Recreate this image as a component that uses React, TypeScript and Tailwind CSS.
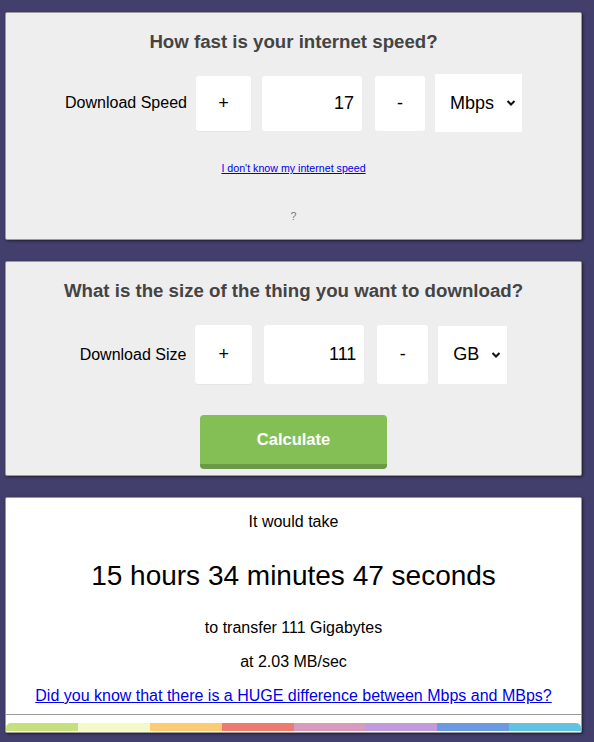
import React, { useState } from "react";

const stripe = [
  "bg-[#c5e07d]",
  "bg-[#f4f9c8]",
  "bg-[#fdcb71]",
  "bg-[#ef7b70]",
  "bg-[#d99bbb]",
  "bg-[#c29bdc]",
  "bg-[#6a9be0]",
  "bg-[#62c2e2]",
];

const Chevron = () => (
  <svg
    width="10"
    height="7"
    viewBox="0 0 10 7"
    className="pointer-events-none absolute right-[6px] top-1/2 -translate-y-1/2"
  >
    <path d="M1.5 1.5 5 5 8.5 1.5" fill="none" stroke="#111" strokeWidth="2" />
  </svg>
);

interface StepperProps {
  label: string;
  value: number;
  onChange: (v: number) => void;
  units: string[];
  unit: string;
  onUnit: (u: string) => void;
  big?: boolean;
}

const Stepper: React.FC<StepperProps> = ({ label, value, onChange, units, unit, onUnit, big }) => {
  const btn = big ? "w-[57px] h-[59px]" : "w-[55px] h-[55px]";
  return (
    <div className="flex items-center justify-center">
      <span className="text-[16px] text-black mr-[9px]">{label}</span>
      <button
        className={`${btn} bg-white rounded-[3px] text-[18px] text-black shadow-[0_1px_1px_rgba(0,0,0,0.04)]`}
        onClick={() => onChange(value + 1)}
      >
        +
      </button>
      <input
        value={value}
        onChange={(e) => onChange(Number(e.currentTarget.value) || 0)}
        className={`${big ? "h-[59px] ml-[12px]" : "h-[55px] ml-[11px]"} w-[100px] bg-white rounded-[3px] text-right pr-[8px] text-[18px] text-black outline-none`}
      />
      <button
        className={`${big ? "w-[51px] h-[59px] ml-[13px]" : "w-[50px] h-[55px] ml-[13px]"} bg-white rounded-[3px] text-[18px] text-black`}
        onClick={() => onChange(Math.max(0, value - 1))}
      >
        -
      </button>
      <div className={`relative ${big ? "ml-[10px] w-[69px] h-[58px]" : "ml-[10px] w-[87px] h-[58px]"} bg-white`}>
        <select
          value={unit}
          onChange={(e) => onUnit(e.currentTarget.value)}
          className="appearance-none w-full h-full bg-white pl-[15px] text-[18px] text-black outline-none"
        >
          {units.map((u) => (
            <option key={u}>{u}</option>
          ))}
        </select>
        <Chevron />
      </div>
    </div>
  );
};

export default function App() {
  const [speed, setSpeed] = useState(17);
  const [size, setSize] = useState(111);
  const [speedUnit, setSpeedUnit] = useState("Mbps");
  const [sizeUnit, setSizeUnit] = useState("GB");

  const panel =
    "w-[577px] border border-[#9a9a9a] rounded-[2px] shadow-[1px_1px_3px_rgba(0,0,0,0.55)]";

  return (
    <div
      className="min-h-[742px] bg-[#433f6d] pt-[12px] pl-[5px] flex flex-col gap-[21px]"
      style={{ fontFamily: '"Liberation Sans", Arial, sans-serif' }}
    >
      <div className={`${panel} bg-[#eeeeee] h-[228px] pt-[17px] flex flex-col items-center`}>
        <h2 className="text-[18.66px] leading-[24px] font-bold text-[#444]">
          How fast is your internet speed?
        </h2>
        <div className="mt-[20px]">
          <Stepper
            label="Download Speed"
            value={speed}
            onChange={setSpeed}
            units={["Kbps", "Mbps", "Gbps"]}
            unit={speedUnit}
            onUnit={setSpeedUnit}
          />
        </div>
        <a href="#" className="mt-[29px] text-[10.66px] leading-[14px] text-[#0000ee] underline">
          I don't know my internet speed
        </a>
        <span className="mt-[34px] text-[10.66px] leading-[14px] text-[#777]">?</span>
      </div>

      <div className={`${panel} bg-[#eeeeee] h-[215px] pt-[17px] flex flex-col items-center`}>
        <h2 className="text-[18.66px] leading-[24px] font-bold text-[#444]">
          What is the size of the thing you want to download?
        </h2>
        <div className="mt-[22px]">
          <Stepper
            label="Download Size"
            value={size}
            onChange={setSize}
            units={["MB", "GB", "TB"]}
            unit={sizeUnit}
            onUnit={setSizeUnit}
            big
          />
        </div>
        <button className="mt-[31px] w-[187px] h-[54px] bg-[#84bf56] border-b-[5px] border-[#6b9a47] rounded-[4px] text-white text-[16.5px] font-bold">
          Calculate
        </button>
      </div>

      <div className={`${panel} bg-white h-[236px] pt-[15px] flex flex-col items-center text-black`}>
        <p className="text-[16px] leading-[18px]">It would take</p>
        <p className="mt-[29px] text-[28px] leading-[32px]">15 hours 34 minutes 47 seconds</p>
        <p className="mt-[27px] text-[16px] leading-[18px]">to transfer 111 Gigabytes</p>
        <p className="mt-[16px] text-[16px] leading-[18px]">at 2.03 MB/sec</p>
        <a href="#" className="mt-[16px] text-[16px] leading-[18px] text-[#0000ee] underline">
          Did you know that there is a HUGE difference between Mbps and MBps?
        </a>
        <div className="mt-[9px] w-full h-[1px] bg-[#9a9a9a]" />
        <div className="mt-[8px] w-full h-[8px] flex rounded-t-[5px] overflow-hidden">
          {stripe.map((c) => (
            <div key={c} className={`flex-1 ${c}`} />
          ))}
        </div>
      </div>
    </div>
  );
}
